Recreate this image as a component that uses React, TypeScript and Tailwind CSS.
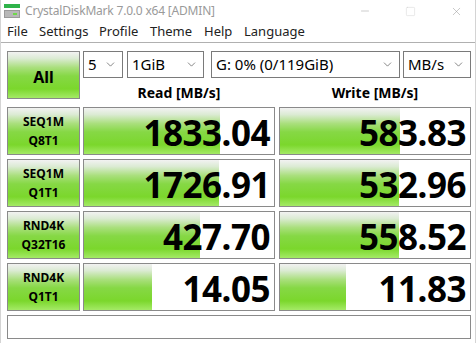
import { ChevronDown, Minus, Square, X } from 'lucide-react';

const barBg =
  'bg-[linear-gradient(to_bottom,#f2f2f2_0%,#dcebd4_14%,#a9df7c_34%,#86d845_52%,#7bd72c_80%,#a4ea66_100%)]';

interface Row {
  l1: string;
  l2: string;
  read: string;
  write: string;
  readBar: number;
  writeBar: number;
}

const rows: Row[] = [
  { l1: 'SEQ1M', l2: 'Q8T1', read: '1833.04', write: '583.83', readBar: 136, writeBar: 120 },
  { l1: 'SEQ1M', l2: 'Q1T1', read: '1726.91', write: '532.96', readBar: 135, writeBar: 119 },
  { l1: 'RND4K', l2: 'Q32T16', read: '427.70', write: '558.52', readBar: 116, writeBar: 119 },
  { l1: 'RND4K', l2: 'Q1T1', read: '14.05', write: '11.83', readBar: 68, writeBar: 66 },
];

function Select({ value, width }: { value: string; width: string }) {
  return (
    <div
      className={`${width} h-[27px] border border-[#7a7a7a] bg-white flex items-center justify-between pl-[4px] pr-[5px] text-[15px] text-black`}
    >
      <span>{value}</span>
      <ChevronDown className="w-[13px] h-[13px] text-[#555]" strokeWidth={1.3} />
    </div>
  );
}

function Score({ value, bar }: { value: string; bar: number }) {
  return (
    <div className="relative w-[192px] h-[48px] border border-[#8a8a8a] bg-white">
      <div className={`absolute left-0 top-0 bottom-0 ${barBg}`} style={{ width: `${bar}px` }} />
      <div className="relative h-full flex items-center justify-end pr-[4px] pt-[4px] text-[35px] font-bold text-black leading-[40px] tracking-[-0.5px]">
        {value}
      </div>
    </div>
  );
}

export default function App() {
  return (
    <div
      className="w-[476px] h-[343px] bg-white border-x border-[#d4d4d4] overflow-hidden"
      style={{ fontFamily: '"Noto Sans", "Open Sans", sans-serif' }}
    >
      {/* title bar */}
      <div className="h-[22px] flex items-center">
        <svg className="ml-[2px] w-[18px] h-[18px]" viewBox="0 0 18 18">
          <rect x="1" y="2" width="16" height="4" fill="#2fb34a" />
          <rect x="1" y="8" width="16" height="8" fill="#9a9a9a" />
          <rect x="2" y="9" width="14" height="6" fill="#b8b8b8" />
          <rect x="10" y="11" width="4" height="2" fill="#6fd84a" />
        </svg>
        <span className="ml-[4px] text-[12px] text-[#9a9a9a] tracking-[-0.2px]">
          CrystalDiskMark 7.0.0 x64 [ADMIN]
        </span>
        <div className="ml-auto flex items-center text-[#9a9a9a]">
          <Minus className="w-[12px] h-[12px] mr-[34px]" strokeWidth={1} />
          <Square className="w-[11px] h-[11px] mr-[34px] text-[#cfcfcf]" strokeWidth={1} />
          <X className="w-[13px] h-[13px] mr-[12px]" strokeWidth={1} />
        </div>
      </div>

      {/* menu bar */}
      <div className="h-[21px] flex items-center pl-[6px] text-[13px] text-[#222] border-b border-[#b0b0b0]">
        <span className="w-[32px]">File</span>
        <span className="w-[60px]">Settings</span>
        <span className="w-[51px]">Profile</span>
        <span className="w-[54px]">Theme</span>
        <span className="w-[40px]">Help</span>
        <span>Language</span>
      </div>

      <div className="pl-[6px] pt-[8px]">
        {/* controls + headers */}
        <div className="flex">
          <div
            className={`w-[73px] h-[48px] border border-[#8a8a8a] ${barBg} flex items-center justify-center pt-[4px] text-[16px] font-bold text-black`}
          >
            All
          </div>
          <div className="ml-[3px] flex flex-col">
            <div className="flex">
              <Select value="5" width="w-[40px]" />
              <div className="ml-[4px]">
                <Select value="1GiB" width="w-[77px]" />
              </div>
              <div className="ml-[7px]">
                <Select value="G: 0% (0/119GiB)" width="w-[189px]" />
              </div>
              <div className="ml-[3px]">
                <Select value="MB/s" width="w-[68px]" />
              </div>
            </div>
            <div className="flex mt-[4px] text-[14px] font-bold text-black">
              <div className="w-[192px] text-center">Read [MB/s]</div>
              <div className="ml-[4px] w-[192px] text-center">Write [MB/s]</div>
            </div>
          </div>
        </div>

        {/* results */}
        <div className="mt-[4px] flex flex-col gap-[4px]">
          {rows.map((r, i) => (
            <div key={i} className="flex">
              <div
                className={`w-[73px] h-[48px] border border-[#8a8a8a] ${barBg} flex flex-col items-center justify-center text-[12px] font-bold text-black leading-[19px]`}
              >
                <span>{r.l1}</span>
                <span>{r.l2}</span>
              </div>
              <div className="ml-[3px]">
                <Score value={r.read} bar={r.readBar} />
              </div>
              <div className="ml-[4px]">
                <Score value={r.write} bar={r.writeBar} />
              </div>
            </div>
          ))}
          <div className="w-[464px] h-[24px] border border-[#8a8a8a] bg-white" />
        </div>
      </div>
    </div>
  );
}
